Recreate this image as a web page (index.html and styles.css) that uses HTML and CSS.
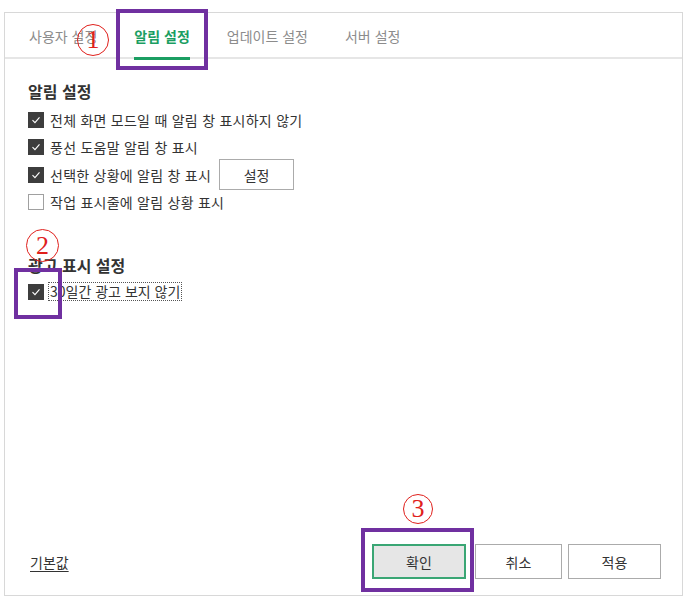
FILE: index.html
```html
<!DOCTYPE html>
<html lang="ko">
<head>
<meta charset="utf-8">
<link rel="stylesheet" href="styles.css">
</head>
<body>
<div class="frame">
  <div class="tabs">
    <div class="tab">사용자 설정</div>
    <div class="tab active">알림 설정</div>
    <div class="tab">업데이트 설정</div>
    <div class="tab">서버 설정</div>
  </div>
  <div class="content">
    <div class="heading">알림 설정</div>
    <div class="row"><span class="cb on"><svg viewBox="0 0 16 16"><path d="M4 8.2 L6.8 11 L12 5"/></svg></span><span class="label">전체 화면 모드일 때 알림 창 표시하지 않기</span></div>
    <div class="row"><span class="cb on"><svg viewBox="0 0 16 16"><path d="M4 8.2 L6.8 11 L12 5"/></svg></span><span class="label">풍선 도움말 알림 창 표시</span></div>
    <div class="row"><span class="cb on"><svg viewBox="0 0 16 16"><path d="M4 8.2 L6.8 11 L12 5"/></svg></span><span class="label">선택한 상황에 알림 창 표시</span><button class="btn small">설정</button></div>
    <div class="row"><span class="cb"></span><span class="label">작업 표시줄에 알림 상황 표시</span></div>
    <div class="heading second">광고 표시 설정</div>
    <div class="row focusrow"><span class="cb on"><svg viewBox="0 0 16 16"><path d="M4 8.2 L6.8 11 L12 5"/></svg></span><span class="label focus">30일간 광고 보지 않기</span></div>
  </div>
  <div class="footer">
    <span class="link">기본값</span>
    <div class="buttons">
      <button class="btn primary">확인</button>
      <button class="btn cancel">취소</button>
      <button class="btn">적용</button>
    </div>
  </div>
</div>
<div class="mark box1"></div>
<div class="mark box2"></div>
<div class="mark box3"></div>
<div class="num n1">1</div>
<div class="num n2">2</div>
<div class="num n3">3</div>
</body>
</html>
```

FILE: styles.css
```css
html, body {
  margin: 0;
  padding: 0;
  background: #ffffff;
}
body {
  width: 683px;
  height: 597px;
  position: relative;
  overflow: hidden;
  font-family: "Noto Sans CJK KR", "Noto Sans", sans-serif;
  color: #333333;
}
.frame {
  margin: 12px 0 0 4px;
  width: 679px;
  height: 584px;
  box-sizing: border-box;
  border: 1px solid #d8d8d8;
  display: flex;
  flex-direction: column;
}
.tabs {
  display: flex;
  gap: 37px;
  padding-left: 24px;
  height: 46px;
  box-sizing: border-box;
  border-bottom: 2px solid #e6e6e6;
}
.tab {
  display: flex;
  align-items: center;
  padding-top: 2px;
  height: 47px;
  box-sizing: border-box;
  border-bottom: 3px solid transparent;
  font-size: 14px;
  color: #8c8c8c;
  white-space: nowrap;
}
.tab.active {
  color: #1b9e62;
  font-weight: 700;
  border-bottom-color: #1b9e62;
}
.content {
  flex: 1;
  padding: 22px 0 0 23px;
}
.heading {
  font-size: 16px;
  font-weight: 700;
  line-height: 20px;
  height: 20px;
  color: #333333;
  margin-bottom: 5px;
}
.heading.second {
  margin-top: 39px;
  margin-bottom: 3px;
}
.row {
  display: flex;
  align-items: center;
  height: 27.5px;
  font-size: 14px;
  letter-spacing: 0.25px;
  color: #333333;
}
.cb {
  width: 16px;
  height: 16px;
  box-sizing: border-box;
  border: 1px solid #a0a0a0;
  background: #ffffff;
  margin-right: 6px;
  flex: none;
  display: flex;
}
.cb.on {
  background: #3d3d3d;
  border-color: #3d3d3d;
}
.cb svg {
  width: 14px;
  height: 14px;
  fill: none;
  stroke: #ffffff;
  stroke-width: 1.3;
}
.label {
  white-space: nowrap;
}
.focusrow .cb {
  margin-right: 4px;
}
.label.focus {
  border: 1px dotted #555555;
  padding: 0 1px 0 1px;
  line-height: 17px;
  letter-spacing: 0;
}
.btn {
  font-family: "Noto Sans CJK KR", "Noto Sans", sans-serif;
  font-size: 14px;
  color: #333333;
  background: #ffffff;
  border: 1px solid #ababab;
  box-sizing: border-box;
  padding: 0;
  cursor: pointer;
}
.btn.small {
  width: 75px;
  height: 31px;
  margin-left: 8px;
  flex: none;
}
.footer {
  display: flex;
  align-items: center;
  justify-content: space-between;
  padding: 0 21px 16px 25px;
}
.link {
  font-size: 14px;
  color: #333333;
  text-decoration: underline;
  text-underline-offset: 3px;
}
.buttons {
  display: flex;
  gap: 6px;
}
.buttons .btn {
  width: 93px;
  height: 35px;
}
.btn.primary {
  width: 94px;
  background: #e6e6e6;
  border: 2px solid #3aa674;
  margin-right: 3px;
}
.btn.cancel {
  width: 87px;
}
.mark {
  position: absolute;
  border: 4px solid #7030a0;
  box-sizing: border-box;
}
.box1 { left: 116px; top: 9px; width: 92px; height: 61px; }
.box2 { left: 14px; top: 268px; width: 48px; height: 51px; }
.box3 { left: 361px; top: 528px; width: 113px; height: 64px; }
.num {
  position: absolute;
  box-sizing: border-box;
  border: 1.5px solid #e0201c;
  border-radius: 50%;
  color: #e0201c;
  font-family: "Liberation Serif", "DejaVu Serif", serif;
  font-size: 26px;
  display: flex;
  align-items: center;
  justify-content: center;
  line-height: 1;
}
.n1 { left: 77px; top: 24px; width: 32px; height: 32px; }
.n2 { left: 26px; top: 229px; width: 33px; height: 33px; }
.n3 { left: 403px; top: 494px; width: 30px; height: 30px; }
```
